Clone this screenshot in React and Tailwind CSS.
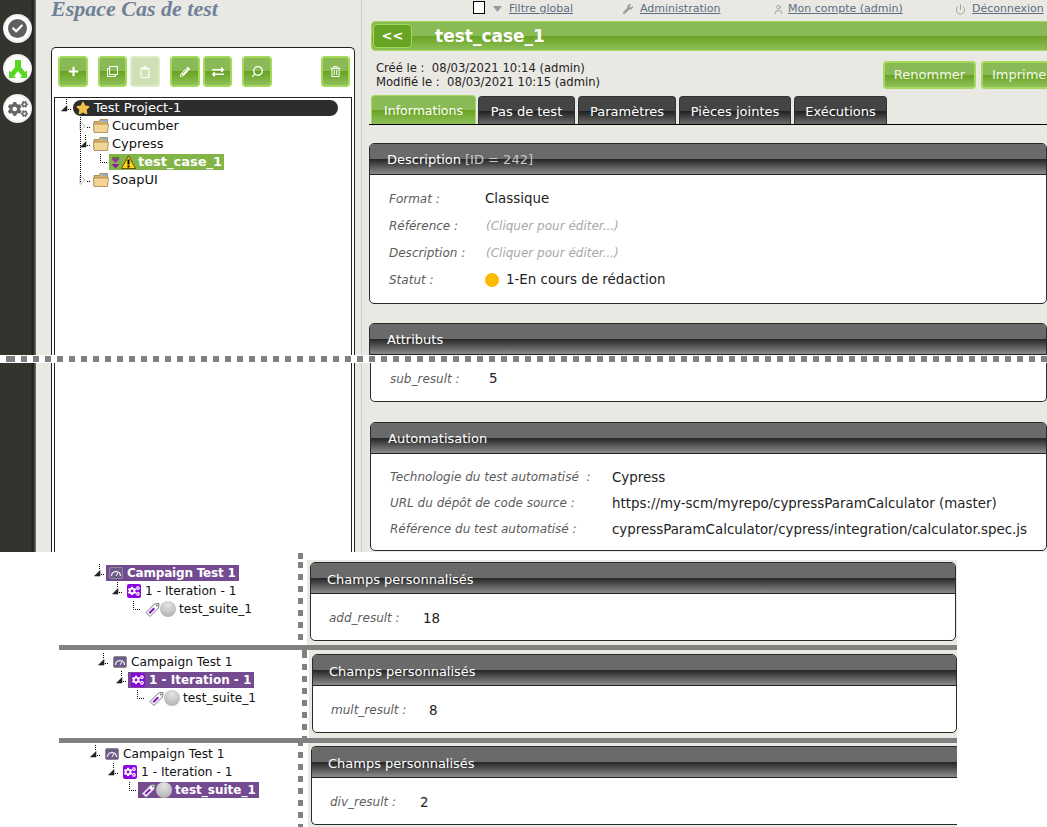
import React from 'react';
import { FaCogs, FaStar, FaWrench, FaPlus, FaRegClone, FaRegClipboard, FaPencilAlt, FaExchangeAlt, FaRegTrashAlt, FaCheck } from 'react-icons/fa';
import { Power, User, Search } from 'lucide-react';

const panelHead = 'bg-[linear-gradient(#6a6a6a_50%,#242424_50%,#8c8c8c)]';
const greenBar = 'bg-[linear-gradient(#8aba55_50%,#68a321_50%,#8fbf5a)]';

// connector glyph of the tree: black/hollow triangle or plain corner, always with its dotted tail
const Toggle = ({ kind }) => {
  if (kind === 'leaf') {
    return (
      <svg width="10" height="18" className="shrink-0">
        <path d="M1.5 1V9.5H9" fill="none" stroke="#000" strokeDasharray="1 1" />
      </svg>
    );
  }
  return (
    <svg width="11" height="18" className="shrink-0">
      {kind === 'open' && <path d="M6.5 0V6" stroke="#000" strokeDasharray="1 1" />}
      {kind === 'open' ? (
        <path d="M7 6.5V12H1.5Z" fill="#222" stroke="#222" strokeWidth="0.6" />
      ) : (
        <path d="M1 4.5L6 9L1 13.5Z" fill="#fff" stroke="#bbb" />
      )}
      <path d="M8 10.5H11" stroke="#000" strokeDasharray="1 1" />
    </svg>
  );
};

const Folder = () => (
  <svg width="16" height="16" viewBox="0 0 16 16" className="shrink-0">
    <path d="M1 3.5H6L7 1.5H14.5V13.5H1Z" fill="#d8b070" stroke="#9c7c44" strokeWidth="0.8" />
    <path d="M9 2H14V4H9Z" fill="#7fb6d6" />
    <path d="M0.5 6H15.5L14.5 14.5H1Z" fill="#f2d596" stroke="#a5854a" strokeWidth="0.8" />
  </svg>
);

const Warning = () => (
  <svg width="15" height="14" viewBox="0 0 15 14" className="shrink-0">
    <path d="M7.5 0.8L14.6 13.5H0.4Z" fill="#ffd21f" stroke="#5c4500" strokeWidth="0.9" strokeLinejoin="round" />
    <path d="M7.5 4.5V9.5" stroke="#000" strokeWidth="2" />
    <path d="M7.5 10.5V12.5" stroke="#000" strokeWidth="2" />
  </svg>
);

const Importance = () => (
  <svg width="11" height="14" viewBox="0 0 11 14" className="shrink-0">
    <path d="M2 3H9" stroke="#333" />
    <path d="M1.5 4H9.5L5.5 8Z" fill="#a22bb0" />
    <path d="M1.5 9H9.5L5.5 13.5Z" fill="#8a1f9c" />
  </svg>
);

const CampaignIcon = () => (
  <svg width="14" height="14" viewBox="0 0 14 14" className="shrink-0">
    <rect x="0.5" y="1.5" width="13" height="11" rx="1.5" fill="#6f5a8c" stroke="#8d8d8d" />
    <path d="M2.5 10A4.5 4.5 0 0 1 11.5 10" fill="none" stroke="#e6e6e6" strokeWidth="1.4" />
    <path d="M7 10L9 6.5" stroke="#fff" />
  </svg>
);

const IterationIcon = () => (
  <span className="flex h-[14px] w-[14px] shrink-0 items-center justify-center rounded-[2px] bg-[#8a05e0] text-white">
    <FaCogs size={12} />
  </span>
);

const TagIcon = () => (
  <svg width="15" height="15" viewBox="0 0 15 15" className="shrink-0">
    <path d="M1 10.5L9.5 2L14 1.5L13.5 6L5 14.5Z" fill="#fff" stroke="#777" />
    <path d="M3.5 10.5L8.5 5.5L10 7L5 12Z" fill="#8a12cc" />
    <circle cx="11.8" cy="3.5" r="0.9" fill="#777" />
  </svg>
);

const Sphere = () => (
  <span className="h-4 w-4 shrink-0 rounded-full bg-[radial-gradient(circle_at_50%_25%,#e4e4e4,#b8b8b8_75%)]" />
);

const ToolButton = ({ icon, className = '', faded }) => (
  <div
    className={`flex h-[31px] items-center justify-center rounded-[4px] border-2 text-white ${
      faded ? 'border-[#dcebc4] bg-[#cfe0b5]' : `border-[#a5d95c] ${greenBar}`
    } ${className}`}
  >
    {icon}
  </div>
);

const Rail = ({ icons }) => (
  <div className="flex w-[36px] shrink-0 flex-col items-center gap-[11px] bg-[linear-gradient(90deg,#35332e_85%,#1e1d1a_92%,#77766f)] pr-[1px] pt-[14px]">
    {icons}
  </div>
);

const RailDisc = ({ children }) => (
  <div className="flex h-[29px] w-[29px] items-center justify-center rounded-full bg-[radial-gradient(circle,#fff_55%,#bdbdbd)]">
    {children}
  </div>
);

const Panel = ({ title, extra, className = '', headClass = 'pl-[17px] pt-[2px]', children }) => (
  <div className={`overflow-hidden rounded-[5px] border border-[#2b2b2b] bg-white ${className}`}>
    <div className={`flex h-[31px] items-center border-b border-[#222] text-[13px] text-white ${panelHead} ${headClass}`}>
      {title}
      {extra && <span className="ml-[4px] text-[#c8c8c8]">{extra}</span>}
    </div>
    {children}
  </div>
);

const Field = ({ label, labelClass, children, className = 'h-[27px]' }) => (
  <div className={`flex items-center text-[13.4px] text-[#222] ${className}`}>
    <span className={`shrink-0 text-[12px] italic text-[#5c5c5c] ${labelClass}`}>{label}</span>
    <span className="flex items-center pt-[2px]">{children}</span>
  </div>
);

const tabs = [
  ['Pas de test', 'w-[97px]'],
  ['Paramètres', 'w-[98px]'],
  ['Pièces jointes', 'w-[112px]'],
  ['Exécutions', 'w-[93px]'],
];

const TopLink = ({ icon, children, className }) => (
  <div className={`flex items-center text-[11px] text-[#5b6e82] ${className}`}>
    {icon}
    <span className="underline">{children}</span>
  </div>
);

const LeftTop = () => (
  <div className="ml-[15px] flex w-[304px] shrink-0 flex-col">
    <div className="flex h-[26px] items-start whitespace-nowrap text-[22px] font-bold italic leading-[17px] text-[#6e8199] [font-family:'Liberation_Serif',serif]">
      Espace Cas de test
    </div>
    <div className="mt-[21px] flex flex-1 flex-col rounded-t-[5px] border-x border-t border-[#222] bg-white px-[2px]">
      <div className="flex h-[49px] items-start pl-[4px] pt-[8px]">
        <ToolButton className="w-[30px]" icon={<FaPlus size={11} />} />
        <ToolButton className="ml-[10px] w-[29px]" icon={<FaRegClone size={11} />} />
        <ToolButton className="ml-[3px] w-[30px]" faded icon={<FaRegClipboard size={12} />} />
        <ToolButton className="ml-[10px] w-[30px]" icon={<FaPencilAlt size={10} />} />
        <ToolButton className="ml-[3px] w-[29px]" icon={<FaExchangeAlt size={12} />} />
        <ToolButton className="ml-[10px] w-[30px]" icon={<Search size={13} strokeWidth={2.5} className="-scale-x-100" />} />
        <ToolButton className="ml-[49px] w-[29px]" icon={<FaRegTrashAlt size={11} />} />
      </div>
      <div className="relative flex-1 border-x border-t border-[#222] pt-px text-[13px] text-[#111]">
        <div className="absolute left-[25px] top-[19px] h-[65px] border-l border-dotted border-black" />
        <div className="flex h-[18px] items-center pl-[5px]">
          <Toggle kind="open" />
          <div className="ml-[2px] flex h-4 w-[265px] items-center rounded-full bg-[#2d2d2d] pl-[3px] text-white">
            <FaStar size={14} className="text-[#f2c04a]" />
            <span className="ml-[4px]">Test Project-1</span>
          </div>
        </div>
        <div className="flex h-[18px] items-center pl-[24px]">
          <Toggle kind="closed" />
          <span className="ml-[3px]"><Folder /></span>
          <span className="ml-[3px]">Cucumber</span>
        </div>
        <div className="flex h-[18px] items-center pl-[24px]">
          <Toggle kind="open" />
          <span className="ml-[3px]"><Folder /></span>
          <span className="ml-[3px]">Cypress</span>
        </div>
        <div className="flex h-[18px] items-center pl-[44px]">
          <Toggle kind="leaf" />
          <div className="flex h-4 items-center bg-[#82b447] pl-[1px] pr-[2px] font-bold text-white">
            <Importance />
            <Warning />
            <span className="ml-[2px]">test_case_1</span>
          </div>
        </div>
        <div className="flex h-[18px] items-center pl-[24px]">
          <Toggle kind="closed" />
          <span className="ml-[3px]"><Folder /></span>
          <span className="ml-[3px]">SoapUI</span>
        </div>
      </div>
    </div>
  </div>
);

const RightTop = () => (
  <div className="ml-[6px] flex-1 overflow-hidden border-l border-[#cfcec9] pl-[7px]">
    <div className="flex h-[21px] items-start pl-[104px] pt-px">
      <span className="h-[13px] w-[12px] shrink-0 border border-black bg-white" />
      <TopLink
        className="ml-[8px] w-[130px] gap-[7px]"
        icon={<svg width="9" height="6"><path d="M0 0H9L4.5 6Z" fill="#9a9a9a" /></svg>}
      >
        Filtre global
      </TopLink>
      <TopLink className="w-[150px] gap-[7px]" icon={<FaWrench size={10} className="text-[#9a9a9a]" />}>Administration</TopLink>
      <TopLink className="w-[182px] gap-[4px]" icon={<User size={11} className="text-[#9a9a9a]" />}>Mon compte (admin)</TopLink>
      <TopLink className="gap-[6px]" icon={<Power size={11} className="text-[#9a9a9a]" />}>Déconnexion</TopLink>
    </div>
    <div className={`ml-[2px] flex h-[30px] w-[700px] items-center rounded-[4px] border border-[#a5d95c] pl-[1px] ${greenBar}`}>
      <div className="flex h-[24px] w-[39px] items-center justify-center rounded-[4px] border border-[#a5d95c] bg-[#69a524] text-[13px] font-bold text-white">
        {'<<'}
      </div>
      <span className="ml-[23px] pt-[2px] text-[17px] font-bold text-white">test_case_1</span>
    </div>
    <div className="flex h-[45px] items-start">
      <div className="ml-[7px] mt-[10px] text-[11.6px] leading-[14px] text-[#222]">
        <div>Créé le :&nbsp; 08/03/2021 10:14 (admin)</div>
        <div>Modifié le :&nbsp; 08/03/2021 10:15 (admin)</div>
      </div>
      <div className="ml-auto mr-[-27px] mt-[10px] flex gap-[5px] text-[13px] text-[#f2f7e8]">
        <div className={`flex h-[28px] w-[93px] items-center justify-center rounded-[4px] border-2 border-[#a5d95c] ${greenBar}`}>Renommer</div>
        <div className={`flex h-[28px] w-[93px] items-center rounded-[4px] border-2 border-[#a5d95c] pl-[9px] ${greenBar}`}>Imprimer</div>
      </div>
    </div>
    <div className="flex h-[29px] items-end border-b border-black text-[13px] text-white">
      <div className={`ml-[2px] flex h-[29px] w-[105px] items-center justify-center rounded-t-[4px] border-x border-t border-[#a5d95c] pt-[2px] text-[12.5px] ${greenBar}`}>Informations</div>
      <div className="ml-[2px] flex gap-[3px]">
        {tabs.map(([name, width]) => (
          <div
            key={name}
            className={`flex h-[28px] items-center justify-center rounded-t-[4px] border-x border-t border-[#333] bg-[linear-gradient(#444_50%,#1c1c1c_50%,#6c6c6c)] pt-[2px] ${width}`}
          >
            {name}
          </div>
        ))}
      </div>
    </div>
    <Panel title="Description" extra="[ID = 242]" className="mt-[18px] w-[678px]">
      <div className="px-[19px] pt-[10px]">
        <Field label="Format :" labelClass="w-[96px]">Classique</Field>
        <Field label="Référence :" labelClass="w-[97px]">
          <span className="mb-[2px] text-[12px] italic text-[#a8a8a8]">(Cliquer pour éditer...)</span>
        </Field>
        <Field label="Description :" labelClass="w-[97px]">
          <span className="mb-[2px] text-[12px] italic text-[#a8a8a8]">(Cliquer pour éditer...)</span>
        </Field>
        <Field label="Statut :" labelClass="w-[96px]">
          <span className="h-[14px] w-[14px] rounded-full bg-[#fdb900]" />
          <span className="ml-[7px]">1-En cours de rédaction</span>
        </Field>
      </div>
      <div className="h-[10px]" />
    </Panel>
    <Panel title="Attributs" className="mt-[19px] h-[60px] w-[678px]" />
  </div>
);

const RightBottom = () => (
  <div className="ml-[6px] flex-1 overflow-hidden border-l border-[#cfcec9] pl-[8px]">
    <div className="flex h-[39px] rounded-b-[5px] border-x border-b border-[#2b2b2b] bg-white pl-[19px]">
      <Field label="sub_result :" labelClass="w-[99px]" className="mt-[2px] h-[27px]">5</Field>
    </div>
    <Panel title="Automatisation" className="mt-[20px] h-[129px] w-[677px]">
      <div className="pl-[19px] pt-[10px]">
        <Field label="Technologie du test automatisé  :" labelClass="w-[222px] whitespace-pre" className="h-[26px]">Cypress</Field>
        <Field label="URL du dépôt de code source :" labelClass="w-[222px]" className="h-[26px]">https://my-scm/myrepo/cypressParamCalculator (master)</Field>
        <Field label="Référence du test automatisé :" labelClass="w-[222px]" className="h-[26px]">cypressParamCalculator/cypress/integration/calculator.spec.js</Field>
      </div>
    </Panel>
  </div>
);

const DottedColumn = ({ className = '' }) => (
  <div className={`w-[5px] shrink-0 bg-[repeating-linear-gradient(#808080_0,#808080_6px,transparent_6px,transparent_12px)] ${className}`} />
);

const selectedLabel = 'flex h-4 items-center bg-[#744a91] font-bold text-white text-[12px]';

const MiniTree = ({ base, top, selected }) => (
  <div className="text-[12.2px] text-[#111]" style={{ paddingLeft: base, paddingTop: top }}>
    <div className="flex h-[18px] items-center">
      <Toggle kind="open" />
      <div className={`ml-[2px] ${selected === 0 ? `${selectedLabel} px-[3px] tracking-[-0.2px]` : 'flex items-center pl-[3px]'}`}>
        <CampaignIcon />
        <span className="ml-[4px]">Campaign Test 1</span>
      </div>
    </div>
    <div className="flex h-[18px] items-center pl-[18px]">
      <Toggle kind="open" />
      <div className={`ml-[2px] ${selected === 1 ? `${selectedLabel} px-[3px]` : 'flex items-center pl-[3px]'}`}>
        <IterationIcon />
        <span className="ml-[4px]">1 - Iteration - 1</span>
      </div>
    </div>
    <div className="flex h-[18px] items-center pl-[39px]">
      <Toggle kind="leaf" />
      <div className={selected === 2 ? `${selectedLabel} px-[3px]` : 'flex items-center pl-[3px]'}>
        <TagIcon />
        <Sphere />
        <span className="ml-[3px]">test_suite_1</span>
      </div>
    </div>
  </div>
);

const ResultRow = ({ height, base, top, selected, dotLeft, dotClass, grayLeft, grayTop, panelTop, rightGap, label, labelWidth, value, clipped }) => (
  <div className="flex" style={{ height }}>
    <div className="shrink-0" style={{ width: dotLeft }}>
      <MiniTree base={base} top={top} selected={selected} />
    </div>
    <DottedColumn className={dotClass} />
    <div className="flex-none bg-white" style={{ width: grayLeft }} />
    <div
      className="flex-none overflow-hidden bg-[#e9e8e3] pl-[3px]"
      style={{ marginTop: grayTop, paddingTop: panelTop, paddingRight: rightGap, width: 957 - dotLeft - 5 - grayLeft }}
    >
      <Panel
        title="Champs personnalisés"
        headClass="pl-[16px] pt-[4px]"
        className={`h-[79px] ${clipped ? 'rounded-r-none border-r-0' : ''}`}
      >
        <div className="pl-[18px] pt-[9px]">
          <Field label={label} labelClass={labelWidth} className="h-[30px]">{value}</Field>
        </div>
      </Panel>
    </div>
  </div>
);

const Bar = () => <div className="ml-[59px] h-[5px] w-[898px] bg-[#808080]" />;

const App = () => {
  const railIcons = (
    <>
      <RailDisc>
        <span className="flex h-[19px] w-[19px] items-center justify-center rounded-full bg-[#5f5f5f] text-white">
          <FaCheck size={11} />
        </span>
      </RailDisc>
      <RailDisc>
        <svg width="22" height="22" viewBox="0 0 22 22">
          <path d="M8 2H14V9L18 14L20 12.5V20H13L15 18L11 13L7 18L9 20H2V12.5L4 14L8 9Z" fill="#58d81e" />
        </svg>
      </RailDisc>
      <RailDisc>
        <FaCogs size={20} className="text-[#666]" />
      </RailDisc>
    </>
  );

  return (
    <div className="h-[827px] w-[1047px] overflow-hidden bg-white [font-family:'DejaVu_Sans',sans-serif]">
      <div className="flex h-[355px] overflow-hidden bg-[#e9e8e3]">
        <Rail icons={railIcons} />
        <LeftTop />
        <RightTop />
      </div>
      <div className="flex h-[8px] items-center bg-white">
        <div className="h-[6px] w-full bg-[repeating-linear-gradient(90deg,#808080_0,#808080_6px,transparent_6px,transparent_12px)] bg-[position:9px_0]" />
      </div>
      <div className="flex h-[189px] overflow-hidden bg-[#e9e8e3]">
        <Rail />
        <div className="ml-[15px] w-[304px] shrink-0 border-x border-[#222] bg-white px-[2px]">
          <div className="h-full border-x border-[#222]" />
        </div>
        <RightBottom />
      </div>
      <ResultRow height={93} base={93} top={12} selected={0} dotLeft={298} dotClass="bg-[position:0_10px]" grayLeft={4} grayTop={8} panelTop={2} rightGap={1} label="add_result :" labelWidth="w-[94px]" value="18" />
      <Bar />
      <ResultRow height={88} base={97} top={3} selected={1} dotLeft={302} dotClass="bg-[position:0_2px]" grayLeft={2} grayTop={0} panelTop={4} rightGap={0} label="mult_result :" labelWidth="w-[98px]" value="8" />
      <Bar />
      <ResultRow height={84} base={89} top={2} selected={2} dotLeft={298} dotClass="bg-[position:0_9px]" grayLeft={5} grayTop={0} panelTop={3} rightGap={0} label="div_result :" labelWidth="w-[90px]" value="2" clipped />
    </div>
  );
};

export default App;
